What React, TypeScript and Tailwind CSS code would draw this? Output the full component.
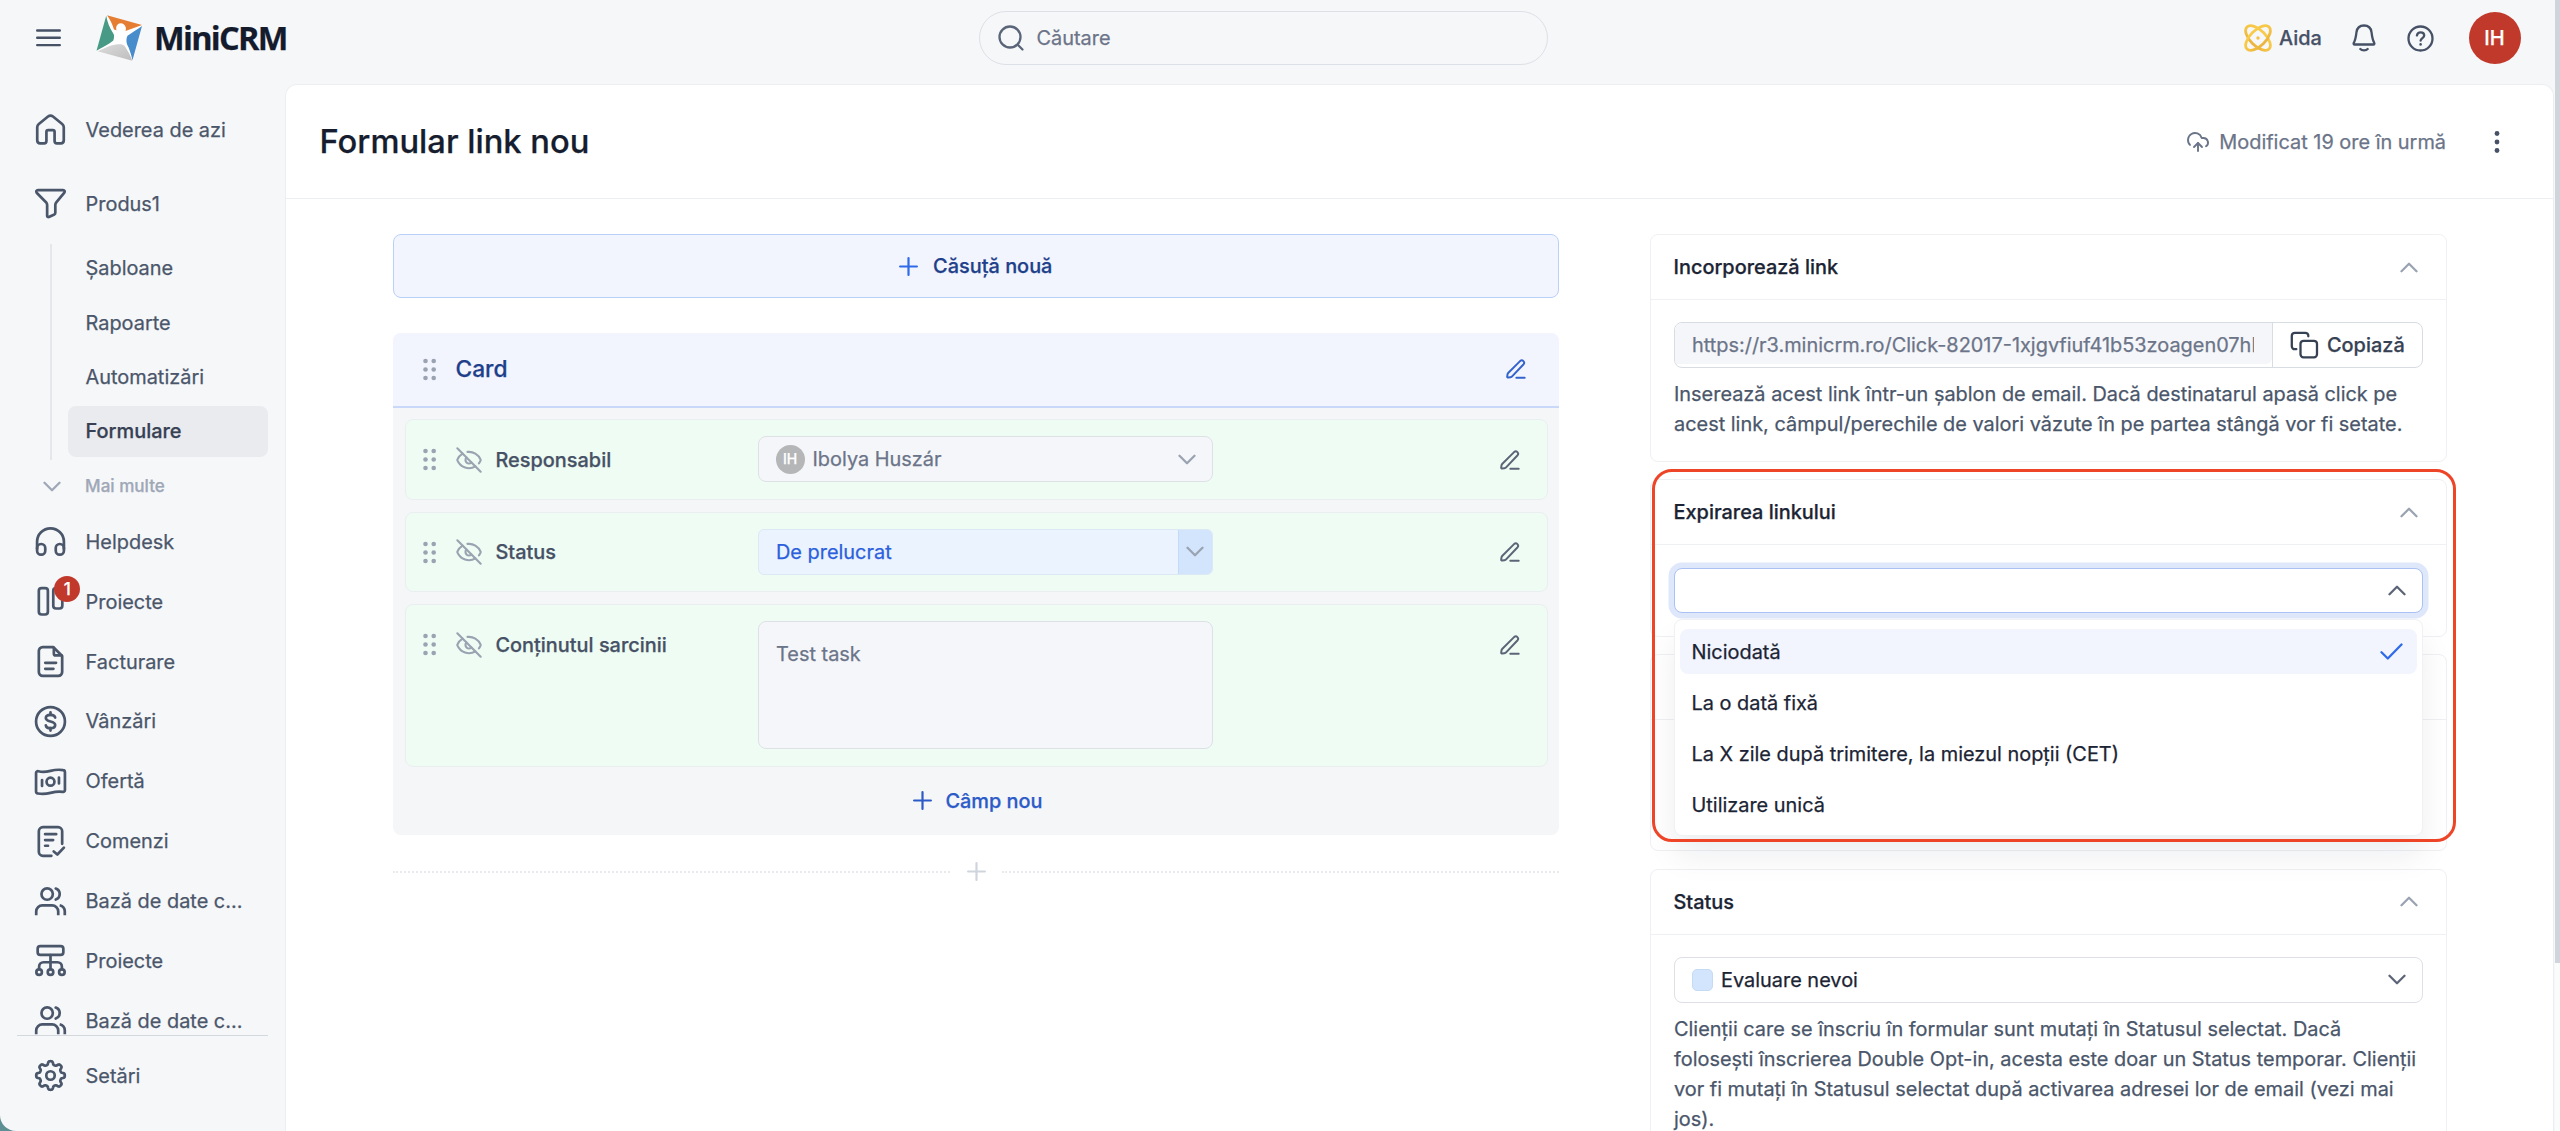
import React from "react";
import { CloudUpload, EyeOff } from "lucide-react";

type IconProps = { children: React.ReactNode; size?: number; stroke?: number; className?: string };

function Icon({ children, size = 35, stroke = 1.85, className = "" }: IconProps) {
  return (
    <svg
      width={size}
      height={size}
      viewBox="0 0 24 24"
      fill="none"
      stroke="currentColor"
      strokeWidth={stroke}
      strokeLinecap="round"
      strokeLinejoin="round"
      className={"shrink-0 overflow-visible " + className}
    >
      {children}
    </svg>
  );
}

const gearPath = (() => {
  const points: string[] = [];
  for (let i = 0; i < 160; i++) {
    const a = (i / 160) * Math.PI * 2;
    const wave = Math.tanh(2 * Math.cos(8 * a)) / Math.tanh(2);
    const r = 8.65 + 1.15 * wave;
    points.push(`${(12 + r * Math.sin(a)).toFixed(2)} ${(12 - r * Math.cos(a)).toFixed(2)}`);
  }
  return `M${points.join("L")}Z`;
})();

const icons = {
  home: (
    <path d="M10.3 3.1 4 8.2c-.7.6-1.1 1.4-1.1 2.3v8.9c0 1.2.8 2.1 2 2.1h2.7c.9 0 1.6-.7 1.6-1.6v-6.3c0-.7.5-1.2 1.2-1.2h3.2c.7 0 1.2.5 1.2 1.2v6.3c0 .9.7 1.6 1.6 1.6h2.7c1.2 0 2-.9 2-2.1v-8.9c0-.9-.4-1.7-1.1-2.300l-6.300-5.100c-1-.8-2.400-.8-3.400 0z" />
  ),
  filter: (
    <path d="M3.4 2.8h17.2c1 0 1.5 1 .9 1.8l-5.4 6.5c-.5.6-.8 1.3-.8 2v5.3c0 .5-.3.9-.7 1.1l-3.7 1.7c-.6.3-1.2-.1-1.2-.7v-7.4c0-.7-.3-1.4-.8-2L2.5 4.6c-.6-.8-.1-1.8.9-1.8z" />
  ),
  headphones: (
    <>
      <path d="M2.8 17v-4.8a9.2 9.2 0 0 1 18.4 0V17" />
      <rect x="2.8" y="13.7" width="5.6" height="7.3" rx="2.7" />
      <rect x="15.6" y="13.7" width="5.6" height="7.3" rx="2.7" />
    </>
  ),
  columns: (
    <>
      <rect x="4" y="2.8" width="6.2" height="18.1" rx="1.9" />
      <rect x="13.9" y="2.8" width="6.2" height="14" rx="1.9" />
    </>
  ),
  document: (
    <>
      <path d="M14 2.2H6.6A2.6 2.6 0 0 0 4 4.8v14.4a2.6 2.6 0 0 0 2.6 2.6h10.8a2.6 2.6 0 0 0 2.6-2.6V8.2z" />
      <path d="M14.3 2.6v4a1.2 1.2 0 0 0 1.2 1.2h4" />
      <path d="M8.4 12.9h7.4M8.4 17h5.6" />
    </>
  ),
  dollar: (
    <>
      <circle cx="12" cy="12" r="9.9" />
      <path d="M12 5.8v1.6M12 16.6v1.6" />
      <path d="M15.2 9.3c-.2-1.2-1.5-1.9-3.2-1.9s-3.2.8-3.2 2.2c0 3.1 6.4 1.7 6.4 4.8 0 1.4-1.5 2.2-3.2 2.2s-3-.7-3.2-1.9" />
    </>
  ),
  banknote: (
    <>
      <path d="M2.1 6.2c0-.9.8-1.4 1.6-1.2 2.9.7 5.5.4 8.3-.3s5.8-1 8.7-.5c.7.1 1.2.7 1.2 1.4v12.3c0 .8-.7 1.4-1.5 1.2-2.8-.4-5.6 0-8.4.7s-5.8.9-8.7.4c-.7-.1-1.2-.7-1.2-1.4z" />
      <circle cx="12" cy="12.1" r="2.7" />
      <path d="M6.2 11v4M17.8 9.3v4" />
    </>
  ),
  order: (
    <>
      <path d="M12.6 21.8H6.8A2.8 2.8 0 0 1 4 19V5a2.8 2.8 0 0 1 2.8-2.8h10.4A2.8 2.8 0 0 1 20 5v8.6" />
      <path d="M8.3 7h7.6M8.3 11h5.5M8.3 14.9h2M14.2 18.8l2.5 2.1 4.5-4.7" />
    </>
  ),
  users: (
    <>
      <circle cx="9.7" cy="6.9" r="3.9" />
      <path d="M15.6 3.1c1.6.6 2.7 2 2.7 3.8s-1.1 3.2-2.7 3.8" />
      <path strokeLinecap="butt" d="M2.2 21.4v-2.5a4.2 4.2 0 0 1 4.2-4.2h6.7a4.2 4.2 0 0 1 4.2 4.2v2.5M18.3 14.6c2.1.5 3.5 2.2 3.5 4.3v2.5" />
    </>
  ),
  org: (
    <>
      <rect x="3.2" y="2.2" width="17.6" height="5.9" rx="1.8" />
      <path d="M12 8.3V18M4.2 18v-1.8a3 3 0 0 1 3-3h9.6a3 3 0 0 1 3 3V18" />
      <circle cx="4.2" cy="20" r="1.9" />
      <circle cx="12" cy="20" r="1.9" />
      <circle cx="19.8" cy="20" r="1.9" />
    </>
  ),
  gear: (
    <>
      <path d={gearPath} />
      <circle cx="12" cy="12" r="2.9" />
    </>
  ),
};

function Chevron({ up = false, className = "" }: { up?: boolean; className?: string }) {
  return (
    <svg width="18" height="11" viewBox="0 0 18 11" fill="none" stroke="currentColor" strokeWidth="2.3" strokeLinecap="round" strokeLinejoin="round" className={"shrink-0 " + className}>
      <path d={up ? "M1.5 9.2 9 1.8l7.5 7.4" : "M1.5 1.8 9 9.2l7.5-7.4"} />
    </svg>
  );
}

function Plus({ className = "" }: { className?: string }) {
  return (
    <svg width="19" height="19" viewBox="0 0 19 19" stroke="currentColor" strokeWidth="2.2" strokeLinecap="round" className={"shrink-0 " + className}>
      <path d="M9.5 1.1v16.8M1.1 9.5h16.8" />
    </svg>
  );
}

function Pencil({ className = "" }: { className?: string }) {
  return (
    <svg width="20" height="20" viewBox="0 0 20 20" fill="none" stroke="currentColor" strokeWidth="2" strokeLinecap="round" strokeLinejoin="round" className={"shrink-0 " + className}>
      <path d="M14.3 1.9 2.4 13.7c-.5.5-.8 1.1-.9 1.7l-.3 2.2c-.1.6.4 1.1 1 1l2.2-.3c.7-.1 1.3-.4 1.7-.9L17.6 5.2a2.35 2.35 0 0 0-3.3-3.3z" />
      <path d="M10.3 18.8h8.4" />
    </svg>
  );
}

function Grip() {
  return (
    <svg width="14" height="23" viewBox="0 0 14 23" fill="#9aa3b2" className="shrink-0">
      {[3, 11.5, 20].map((y) => (
        <React.Fragment key={y}>
          <circle cx="2.5" cy={y} r="2.3" />
          <circle cx="10.7" cy={y} r="2.3" />
        </React.Fragment>
      ))}
    </svg>
  );
}

function Logo() {
  return (
    <svg width="47" height="46" viewBox="0 0 47 46" className="shrink-0">
      <defs>
        <linearGradient id="grey" x1="0" x2="1" y1="0" y2="1">
          <stop offset="0" stopColor="#dcdcdc" />
          <stop offset="1" stopColor="#bdbdbd" />
        </linearGradient>
      </defs>
      <path d="M10.5.3 46 10.2 37 45.8.5 36.3z" fill="#fff" />
      <path d="M11 .3 46 10 29.500 16c.3-1 .6-2 .3-3.3-.6-2.800-2.600-4.400-5-4.400-2.500 0-4.300 1.700-4.600 4.300-.1 1 0 1.900.3 2.700l-2.500-.8C16.500 9.500 14 4.500 11 .3z" fill="#e57d33" />
      <path d="M10.2.8C11.500 7 13.500 13.200 17 18c1.500 2 1.300 4.500.3 7.500C13.500 29 7 32 .5 35.700z" fill="#479a85" />
      <path d="M46 11 36.5 45.3c-1.500-6-3-11.500-5.500-16-.8-3-.8-6 .5-8.500 3.500-2.500 9.500-6.300 14.500-9.800z" fill="#478ccb" />
      <path d="M1.5 36.3C8 33.500 13 30.500 20 29.500c4-.5 7.500-.3 9 2 3 4.500 5.500 9 7.300 14.200z" fill="url(#grey)" />
    </svg>
  );
}

function NavRow({ icon, label, badge }: { icon: React.ReactNode; label: string; badge?: string }) {
  return (
    <div className="flex h-[59.9px] shrink-0 items-center pl-[33.4px] text-[#4a566a]">
      <div className="relative">
        <Icon>{icon}</Icon>
        {badge && (
          <span className="absolute top-[-8px] left-[20.8px] flex size-[26px] items-center justify-center rounded-full bg-[#c1392b] text-[17px] font-medium text-white">
            {badge}
          </span>
        )}
      </div>
      <span className="ml-[17.2px] whitespace-nowrap">{label}</span>
    </div>
  );
}

function Sidebar() {
  const sub = ["Șabloane", "Rapoarte", "Automatizări", "Formulare"];
  return (
    <aside className="flex w-[285px] shrink-0 flex-col">
      <div className="flex h-[959px] flex-col overflow-hidden pt-[24px]">
        <NavRow icon={icons.home} label="Vederea de azi" />
        <div className="h-[14px] shrink-0" />
        <NavRow icon={icons.filter} label="Produs1" />
        <div className="mt-[7.5px] flex shrink-0">
          <div className="mt-[3px] ml-[50px] h-[216px] w-[2px] bg-[#e5e7eb]" />
          <div className="ml-[16px] w-[199.5px]">
            {sub.map((s) => (
              <div key={s} className="flex h-[54.33px] items-center">
                <div
                  className={
                    s === "Formulare"
                      ? "flex h-[51px] w-full items-center rounded-[8px] bg-[#eaebef] pl-[17.5px] font-medium text-[#364153]"
                      : "flex h-[51px] w-full items-center pl-[17.5px] text-[#4a566a]"
                  }
                >
                  {s}
                </div>
              </div>
            ))}
          </div>
        </div>
        <div className="flex h-[51.5px] shrink-0 items-center pl-[42.8px] text-[17.07px] font-medium text-[#9fa8b7]">
          <Chevron />
          <span className="ml-[24.3px]">Mai multe</span>
        </div>
        <NavRow icon={icons.headphones} label="Helpdesk" />
        <NavRow icon={icons.columns} label="Proiecte" badge="1" />
        <NavRow icon={icons.document} label="Facturare" />
        <NavRow icon={icons.dollar} label="Vânzări" />
        <NavRow icon={icons.banknote} label="Ofertă" />
        <NavRow icon={icons.order} label="Comenzi" />
        <NavRow icon={icons.users} label="Bază de date c..." />
        <NavRow icon={icons.org} label="Proiecte" />
        <NavRow icon={icons.users} label="Bază de date c..." />
      </div>
      <div className="mr-[17.3px] ml-[17px] border-t border-[#d3d7de]" />
      <div className="pt-[10px]">
        <NavRow icon={icons.gear} label="Setări" />
      </div>
    </aside>
  );
}

function TopBar() {
  return (
    <header className="flex h-[76px] shrink-0 items-center text-[#465166]">
      <svg width="25" height="18" viewBox="0 0 25 18" stroke="currentColor" strokeWidth="2.4" strokeLinecap="round" className="ml-[35.5px] shrink-0">
        <path d="M1.2 1.5h22.6M1.2 8.8h22.6M1.2 16.1h22.6" />
      </svg>
      <div className="ml-[35.5px]">
        <Logo />
      </div>
      <span className="ml-[11px] w-[150px] font-['Open_Sans'] text-[32.5px] leading-[46px] font-bold tracking-[-1.7px] text-[#141b2c]">MiniCRM</span>
      <div className="ml-[674.5px] flex h-[54px] w-[569px] shrink-0 items-center rounded-full border border-[#dde0e6] pl-[17px] text-[#6b7488]">
        <svg width="28" height="28" viewBox="0 0 28 28" fill="none" stroke="#5b6579" strokeWidth="2.3" strokeLinecap="round">
          <circle cx="13" cy="13" r="10.5" />
          <path d="m21 21 4.5 4.5" />
        </svg>
        <span className="ml-[12px]">Căutare</span>
      </div>
      <svg width="28" height="28" viewBox="0 0 28 28" fill="none" strokeWidth="2.8" stroke="url(#gold)" className="ml-[696.5px] shrink-0">
        <defs>
          <linearGradient id="gold" x1="0" x2="0" y1="0" y2="28" gradientUnits="userSpaceOnUse">
            <stop offset="0" stopColor="#fbd04d" />
            <stop offset="0.6" stopColor="#f5c243" />
            <stop offset="1" stopColor="#dfa63a" />
          </linearGradient>
        </defs>
        <ellipse cx="14" cy="14" rx="15.6" ry="7.8" transform="rotate(45 14 14)" />
        <ellipse cx="14" cy="14" rx="15.6" ry="7.8" transform="rotate(-45 14 14)" />
        <circle cx="14" cy="14" r="1.7" fill="#f5c243" stroke="none" />
      </svg>
      <span className="ml-[7px] w-[43px] font-medium">Aida</span>
      <svg width="24" height="28" viewBox="0 0 24 28" fill="none" stroke="currentColor" strokeWidth="2.3" strokeLinecap="round" strokeLinejoin="round" className="ml-[30px] shrink-0">
        <path d="M12 1.5c-4.2 0-7 2.8-7.5 6.7-.5 4.2-1.1 8-2.7 10.6-.5.8-.1 1.7.8 1.7h18.8c.9 0 1.3-.9.8-1.7-1.6-2.6-2.2-6.4-2.7-10.6C19 4.3 16.2 1.5 12 1.5z" />
        <path d="M8.3 25c1.7 1.9 5.7 1.9 7.4 0" />
      </svg>
      <svg width="27" height="27" viewBox="0 0 27 27" fill="none" stroke="currentColor" strokeWidth="2.3" strokeLinecap="round" strokeLinejoin="round" className="ml-[31px] shrink-0">
        <circle cx="13.5" cy="13.5" r="12" />
        <path d="M9.9 10.4c.4-1.9 1.8-3 3.7-3 2.1 0 3.6 1.3 3.6 3.1 0 2.4-3.6 2.7-3.6 5.2" />
        <circle cx="13.6" cy="19.4" r=".6" fill="currentColor" strokeWidth="1.4" />
      </svg>
      <div className="ml-[34.5px] flex size-[52px] shrink-0 items-center justify-center rounded-full bg-[#c1392b] text-[20px] font-medium text-white">IH</div>
    </header>
  );
}

function FieldRow({ label, children, tall = false }: { label: string; children: React.ReactNode; tall?: boolean }) {
  return (
    <div
      className={
        tall
          ? "flex h-[162.7px] items-start rounded-[8px] border border-[#eaeef0] bg-[#effcf3]"
          : "flex h-[80.5px] items-start rounded-[8px] border border-[#eaeef0] bg-[#effcf3]"
      }
    >
      <div className="flex h-[78.5px] w-[352px] items-center pl-[17.8px]">
        <Grip />
        <EyeOff size={28} strokeWidth={1.85} color="#9aa3b2" className="ml-[18.2px]" />
        <span className="ml-[12px] font-medium text-[#465166]">{label}</span>
      </div>
      <div className="w-[455px] pt-[16px]">{children}</div>
      <div className="flex h-[78.5px] flex-1 items-center justify-end pr-[26.5px] text-[#5b6577]">
        <Pencil />
      </div>
    </div>
  );
}

function Editor() {
  return (
    <section className="w-[1166px] shrink-0">
      <div className="flex h-[64px] items-center justify-center rounded-[8px] border border-[#b9d0f8] bg-[#f2f5fe] pr-[1px] font-medium text-[#1e3f8a]">
        <Plus className="text-[#2f6ae8]" />
        <span className="ml-[15.5px]">Căsuță nouă</span>
      </div>
      <div className="mt-[34.7px] h-[502px] overflow-hidden rounded-[8px] bg-[#f5f6f8]">
        <div className="flex h-[75.3px] items-center border-b-2 border-[#c9d8f9] bg-[#f2f5fe] pl-[29.5px]">
          <Grip />
          <span className="ml-[19px] text-[22.75px] font-medium text-[#1e3f8a]">Card</span>
          <Pencil className="mr-[33px] ml-auto text-[#3563cc]" />
        </div>
        <div className="flex flex-col gap-[12px] px-[11.5px] pt-[11.3px]">
          <FieldRow label="Responsabil">
            <div className="flex h-[46px] items-center rounded-[8px] border-[1.5px] border-[#dde1e6] bg-[#f5f6f9] pr-[16px] pl-[17px] text-[#6b7488]">
              <span className="flex size-[29px] items-center justify-center rounded-full bg-[#b5b6b8] text-[14px] font-medium text-white">IH</span>
              <span className="ml-[8px]">Ibolya Huszár</span>
              <Chevron className="ml-auto text-[#9aa3b2]" />
            </div>
          </FieldRow>
          <FieldRow label="Status">
            <div className="flex h-[46px] overflow-hidden rounded-[6px] border border-[#dde8f5] bg-[#ebf3fe]">
              <span className="flex flex-1 items-center pl-[17.5px] text-[#2b5fdc]">De prelucrat</span>
              <span className="flex w-[33.5px] items-center justify-center border-l border-[#c5dbf4] bg-[#d2e5fc] text-[#9aa3b2]">
                <Chevron />
              </span>
            </div>
          </FieldRow>
          <FieldRow label="Conținutul sarcinii" tall>
            <div className="h-[128px] rounded-[8px] border-[1.5px] border-[#dde1e6] bg-[#f5f6f9] px-[17.5px] pt-[17px] leading-[30px] text-[#6b7488]">Test task</div>
          </FieldRow>
        </div>
        <div className="flex h-[67px] items-center justify-center pt-[1px] pl-[3.5px] font-medium text-[#2c5bc8]">
          <Plus />
          <span className="ml-[13.5px]">Câmp nou</span>
        </div>
      </div>
      <div className="mt-[27.5px] flex items-center justify-between text-[#d0d5dd]">
        <div className="w-[557px] border-t-2 border-dotted border-[#e8eaee]" />
        <Plus />
        <div className="w-[557px] border-t-2 border-dotted border-[#e8eaee]" />
      </div>
    </section>
  );
}

function Card({ title, children, className }: { title?: string; children?: React.ReactNode; className: string }) {
  return (
    <div className={"shrink-0 rounded-[8px] border border-[#eef0f3] bg-white " + className}>
      <div className="flex h-[65px] items-center justify-between border-b border-[#eef0f3] pr-[28px] pl-[22.5px]">
        <span className="font-medium text-[#1b2434]">{title}</span>
        <Chevron up className="text-[#9aa3b2]" />
      </div>
      <div className="px-[23px] text-[#4a566a]">{children}</div>
    </div>
  );
}

function ExpirySelect() {
  const options = ["Niciodată", "La o dată fixă", "La X zile după trimitere, la miezul nopții (CET)", "Utilizare unică"];
  return (
    <div className="relative">
      <div className="flex h-[45px] items-center justify-end rounded-[8px] border border-[#a9c1f3] bg-white pr-[16px] text-[#5b6577] shadow-[0_0_0_5.5px_#dfe8fa]">
        <Chevron up />
      </div>
      <div className="absolute top-[51.5px] left-0 z-10 flex h-[217px] w-full flex-col gap-[6px] rounded-[8px] border border-[#f0f1f3] bg-white px-[5px] pt-[9px] text-[#1b2434] shadow-[0_20px_32px_rgba(20,30,50,0.07)]">
        {options.map((o, i) => (
          <div
            key={o}
            className={
              i === 0
                ? "flex h-[45px] shrink-0 items-center justify-between rounded-[8px] bg-[#f2f5fe] pr-[14px] pl-[11.5px]"
                : "flex h-[45px] shrink-0 items-center pl-[11.5px]"
            }
          >
            <span>{o}</span>
            {i === 0 && (
              <svg width="23" height="17" viewBox="0 0 23 17" fill="none" stroke="#2f6ae8" strokeWidth="2.3" strokeLinecap="round" strokeLinejoin="round">
                <path d="m1.5 9.3 6.3 6.2L21.5 1.5" />
              </svg>
            )}
          </div>
        ))}
      </div>
    </div>
  );
}

function Settings() {
  return (
    <section className="relative ml-[91px] flex w-[796.5px] shrink-0 flex-col">
      <Card title="Incorporează link" className="h-[228px]">
        <div className="mt-[22px] flex h-[45.5px] overflow-hidden rounded-[8px] border border-[#d8dce3]">
          <div className="w-[597px] pb-[3px]">
            <div className="flex h-full items-center overflow-hidden rounded-br-[6px] bg-[#f5f6f9] px-[17px] pt-[2.5px] text-[#6b7488]">
              <span className="w-[562px] overflow-hidden whitespace-nowrap">https://r3.minicrm.ro/Click-82017-1xjgvfiuf41b53zoagen07hl</span>
            </div>
          </div>
          <div className="flex flex-1 items-center border-l border-[#d8dce3] pl-[17px] font-medium text-[#364153]">
            <svg width="29" height="28" viewBox="0 0 29 28" fill="none" stroke="currentColor" strokeWidth="2.3" strokeLinecap="round" strokeLinejoin="round" className="shrink-0">
              <rect x="10.5" y="9.8" width="16.5" height="16.5" rx="3" />
              <path d="M6.3 18.2H4.8a3 3 0 0 1-3-3V4.8a3 3 0 0 1 3-3h10.5a3 3 0 0 1 3 3v.5" />
            </svg>
            <span className="ml-[8px]">Copiază</span>
          </div>
        </div>
        <p className="mt-[11px] leading-[30px] whitespace-nowrap">
          Inserează acest link într-un șablon de email. Dacă destinatarul apasă click pe
          <br />
          acest link, câmpul/perechile de valori văzute în pe partea stângă vor fi setate.
        </p>
      </Card>
      <Card title="Expirarea linkului" className="mt-[17.3px] h-[158px]">
        <div className="mt-[22.5px]">
          <ExpirySelect />
        </div>
      </Card>
      <Card className="mt-[17px] h-[197px]" />
      <Card title="Status" className="mt-[17.5px] h-[320px]">
        <div className="mt-[22px] flex h-[46px] items-center rounded-[8px] border-[1.5px] border-[#dde0e6] bg-white pr-[15.5px] pl-[16.5px] text-[#1b2434]">
          <span className="size-[21.5px] rounded-[5px] border border-[#c5dbf4] bg-[#d2e5fc]" />
          <span className="ml-[8px]">Evaluare nevoi</span>
          <Chevron className="ml-auto text-[#5b6577]" />
        </div>
        <p className="mt-[11.5px] leading-[30px] whitespace-nowrap">
          Clienții care se înscriu în formular sunt mutați în Statusul selectat. Dacă
          <br />
          folosești înscrierea Double Opt-in, acesta este doar un Status temporar. Clienții
          <br />
          vor fi mutați în Statusul selectat după activarea adresei lor de email (vezi mai
          <br />
          jos).
        </p>
      </Card>
      <div className="pointer-events-none absolute top-[234.5px] left-[2px] z-20 h-[373px] w-[804px] rounded-[20px] border-[3px] border-[#ee4427]" />
    </section>
  );
}

export default function App() {
  return (
    <div className="relative flex h-[1131px] w-[2560px] overflow-hidden bg-[#5c9094] font-['Inter',sans-serif] text-[19.91px] leading-[28px] [-webkit-text-stroke:0.25px]">
      <div className="flex w-[2555px] shrink-0 flex-col overflow-hidden rounded-bl-[16px] bg-[#f6f7f9]">
        <TopBar />
        <div className="flex flex-1">
          <Sidebar />
          <main className="mt-[8px] h-[1047px] w-[2269px] overflow-hidden rounded-t-[12px] border border-b-0 border-[#eceef1] bg-white">
            <div className="flex h-[114px] items-center border-b border-[#eceef1] pr-[53px] pl-[33.5px]">
              <h1 className="pb-px text-[32.7px] font-medium text-[#161d2e]">Formular link nou</h1>
              <CloudUpload size={24} strokeWidth={1.9} color="#6b7488" className="ml-auto" />
              <span className="ml-[9.5px] text-[#6b7488]">Modificat 19 ore în urmă</span>
              <svg width="6" height="24" viewBox="0 0 6 24" fill="#465166" className="ml-[48px]">
                <circle cx="3" cy="3.5" r="2.4" />
                <circle cx="3" cy="12" r="2.4" />
                <circle cx="3" cy="20.5" r="2.4" />
              </svg>
            </div>
            <div className="flex pt-[35px] pl-[107px]">
              <Editor />
              <Settings />
            </div>
          </main>
        </div>
      </div>
      <div className="h-full w-[5px] bg-[#fafbfb]">
        <div className="h-[963px] bg-[#d0d5dc]" />
      </div>
    </div>
  );
}
